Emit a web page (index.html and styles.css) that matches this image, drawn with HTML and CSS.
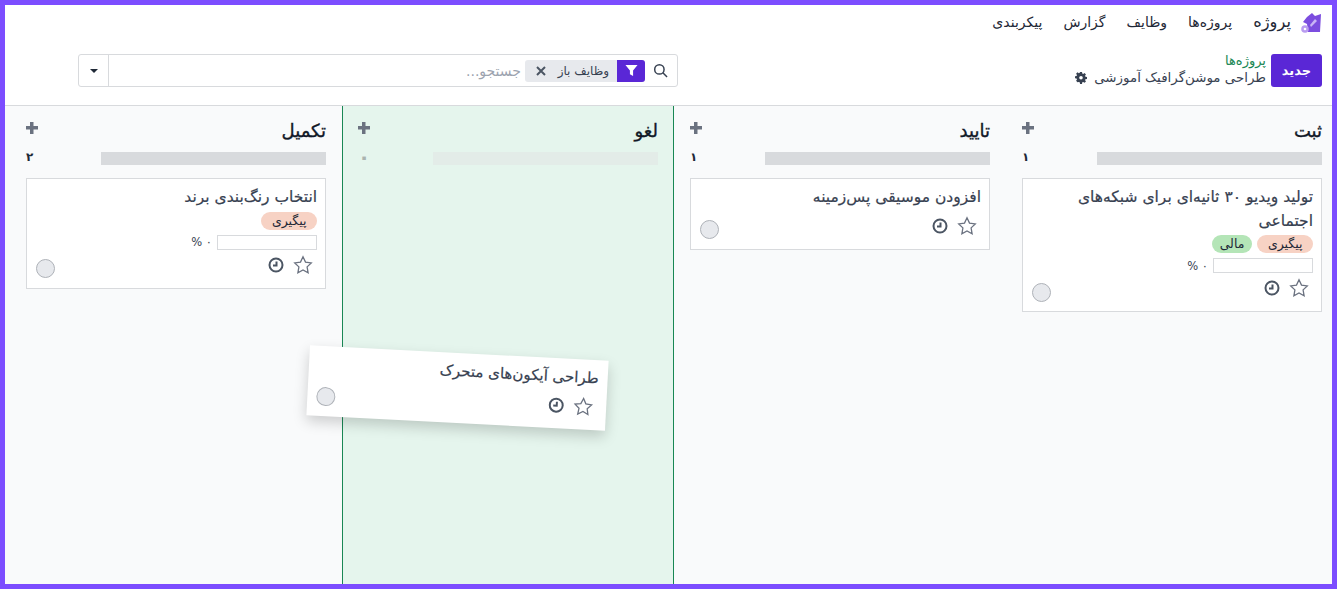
FILE: index.html
```html
<!DOCTYPE html>
<html lang="fa" dir="rtl">
<head>
<meta charset="utf-8">
<title>پروژه</title>
<link rel="stylesheet" href="styles.css">
</head>
<body>
<div class="app">
  <nav class="navbar">
    <svg class="logo" viewBox="0 0 22 22" aria-hidden="true">
      <path class="logo-main" d="M7 5 L12 1 L15 4 L21 2 L20 20 L8 20 L7 12 L3 10 Z"/>
      <path class="logo-cut" d="M10 13 L15 7 L17 9 L11 15 Z"/>
      <circle class="logo-gear" cx="5" cy="17" r="3.800"/>
      <circle class="logo-hole" cx="5" cy="17" r="1.300"/>
    </svg>
    <span class="brand">پروژه</span>
    <a class="nav-link">پروژه‌ها</a>
    <a class="nav-link">وظایف</a>
    <a class="nav-link">گزارش</a>
    <a class="nav-link">پیکربندی</a>
  </nav>
  <header class="panel">
    <button class="btn-new">جدید</button>
    <div class="crumbs">
      <a class="crumb-link">پروژه‌ها</a>
      <div class="crumb-current">طراحی موشن‌گرافیک آموزشی
        <svg class="gear" viewBox="0 0 16 16" aria-hidden="true"><path d="M6.600 0h2.800l.4 2.200 1.300.6 1.900-1.300 2 2-1.300 1.900.6 1.300 2.200.4v2.800l-2.200.4-.6 1.300 1.300 1.900-2 2-1.900-1.300-1.300.6-.4 2.200H6.600l-.4-2.200-1.300-.6L3 14.500l-2-2 1.300-1.900-.6-1.300L-.5 9V6.200l2.200-.4.6-1.300L1 2.600l2-2 1.900 1.300 1.300-.6z" transform="translate(.5 -.1) scale(.94)"/><circle class="gear-hole" cx="8" cy="7.600" r="2.400"/></svg>
      </div>
    </div>
    <div class="search">
      <svg class="search-icon" viewBox="0 0 16 16" aria-hidden="true"><circle cx="6.800" cy="6.800" r="5"/><path d="M10.500 10.500 L15 15"/></svg>
      <div class="facet">
        <span class="facet-icon"><svg viewBox="0 0 14 14" aria-hidden="true"><path d="M0.500 1h13L8.700 7v6L5.300 11V7z"/></svg></span>
        <span class="facet-label">وظایف باز</span>
        <svg class="facet-x" viewBox="0 0 10 10" aria-hidden="true"><path d="M1 1 L9 9 M9 1 L1 9"/></svg>
      </div>
      <span class="placeholder">جستجو...</span>
      <span class="search-drop"><i class="caret"></i></span>
    </div>
  </header>
  <main class="board">
    <section class="col col-first">
      <div class="col-head"><h2>ثبت</h2><span class="plus"></span></div>
      <div class="col-stats"><div class="bar"></div><b class="count">۱</b></div>
      <article class="card">
        <h3>تولید ویدیو ۳۰ ثانیه‌ای برای شبکه‌های اجتماعی</h3>
        <div class="tags"><span class="tag tag-red">پیگیری</span><span class="tag tag-green">مالی</span></div>
        <div class="progress"><span class="progress-box"></span><span class="progress-val">۰ %</span></div>
        <div class="card-foot">
          <svg class="star" viewBox="0 0 20 20" aria-hidden="true"><path d="M10 1.800l2.500 5.300 5.800.8-4.200 4 1 5.800-5.100-2.800-5.100 2.800 1-5.800-4.200-4 5.800-.8z"/></svg>
          <svg class="clock" viewBox="0 0 16 16" aria-hidden="true"><circle cx="8" cy="8" r="6.500"/><path d="M8.500 4.500V8.500H5"/></svg>
          <span class="avatar"></span>
        </div>
      </article>
    </section>
    <section class="col">
      <div class="col-head"><h2>تایید</h2><span class="plus"></span></div>
      <div class="col-stats"><div class="bar"></div><b class="count">۱</b></div>
      <article class="card">
        <h3>افزودن موسیقی پس‌زمینه</h3>
        <div class="card-foot">
          <svg class="star" viewBox="0 0 20 20" aria-hidden="true"><path d="M10 1.800l2.500 5.300 5.800.8-4.200 4 1 5.800-5.100-2.800-5.100 2.800 1-5.800-4.200-4 5.800-.8z"/></svg>
          <svg class="clock" viewBox="0 0 16 16" aria-hidden="true"><circle cx="8" cy="8" r="6.500"/><path d="M8.500 4.500V8.500H5"/></svg>
          <span class="avatar"></span>
        </div>
      </article>
    </section>
    <section class="col col-drop">
      <div class="col-head"><h2>لغو</h2><span class="plus"></span></div>
      <div class="col-stats"><div class="bar"></div><b class="count">۰</b></div>
    </section>
    <section class="col">
      <div class="col-head"><h2>تکمیل</h2><span class="plus"></span></div>
      <div class="col-stats"><div class="bar"></div><b class="count">۲</b></div>
      <article class="card">
        <h3>انتخاب رنگ‌بندی برند</h3>
        <div class="tags"><span class="tag tag-red">پیگیری</span></div>
        <div class="progress"><span class="progress-box"></span><span class="progress-val">۰ %</span></div>
        <div class="card-foot">
          <svg class="star" viewBox="0 0 20 20" aria-hidden="true"><path d="M10 1.800l2.500 5.300 5.800.8-4.200 4 1 5.800-5.100-2.800-5.100 2.800 1-5.800-4.200-4 5.800-.8z"/></svg>
          <svg class="clock" viewBox="0 0 16 16" aria-hidden="true"><circle cx="8" cy="8" r="6.500"/><path d="M8.500 4.500V8.500H5"/></svg>
          <span class="avatar"></span>
        </div>
      </article>
    </section>
    <article class="card card-drag">
      <h3>طراحی آیکون‌های متحرک</h3>
      <div class="card-foot">
        <svg class="star" viewBox="0 0 20 20" aria-hidden="true"><path d="M10 1.800l2.500 5.300 5.800.8-4.200 4 1 5.800-5.100-2.800-5.100 2.800 1-5.800-4.200-4 5.800-.8z"/></svg>
        <svg class="clock" viewBox="0 0 16 16" aria-hidden="true"><circle cx="8" cy="8" r="6.500"/><path d="M8.500 4.500V8.500H5"/></svg>
        <span class="avatar"></span>
      </div>
    </article>
  </main>
</div>
</body>
</html>
```
FILE: styles.css
```css
* { box-sizing: border-box; }
html, body { margin: 0; height: 100%; }
body {
  font-family: "DejaVu Sans", "Noto Sans", sans-serif;
  color: #374151;
  background: #fff;
  overflow: hidden;
}
.app {
  height: 589px;
  border: 5px solid #7c4dff;
  display: flex;
  flex-direction: column;
  background: #fff;
}
.navbar {
  height: 33px;
  display: flex;
  align-items: center;
  padding: 0 10px 0 0;
  flex: none;
}
.logo { width: 22px; height: 22px; margin-left: 9px; position: relative; top: 1px; }
.logo-main { fill: #7c4ddf; }
.logo-cut { fill: #c9b5f5; }
.logo-gear { fill: #b99cf0; }
.logo-hole { fill: #fff; }
.brand { font-size: 16.300px; color: #1f2937; margin-left: 21px; }
.nav-link { font-size: 14px; color: #1f2937; margin-left: 21px; }
.panel {
  height: 68px;
  flex: none;
  border-bottom: 1px solid #d8dadd;
  display: flex;
  align-items: flex-start;
  padding: 16px 10px 0 0;
}
.btn-new {
  width: 51px;
  height: 33px;
  border: 0;
  border-radius: 3px;
  background: #5a27d6;
  color: #fff;
  font: bold 13px "DejaVu Sans", sans-serif;
  margin-left: 5px;
  padding: 0;
}
.crumbs { flex: 1; display: flex; flex-direction: column; }
.crumb-link { color: #198754; font-size: 13px; line-height: 13px; }
.crumb-current { font-size: 13.400px; line-height: 18px; margin-top: 2px; color: #374151; display: flex; align-items: center; gap: 7px; }
.gear { width: 12px; height: 12px; fill: #374151; }
.gear-hole { fill: #fff; }
.search {
  width: 600px;
  height: 33px;
  margin-left: 73px;
  border: 1px solid #d8dadd;
  border-radius: 3px;
  display: flex;
  align-items: center;
  background: #fff;
  flex: none;
}
.search-icon { width: 15px; height: 15px; fill: none; stroke: #374151; stroke-width: 1.600; margin: 0 9px 0 8px; flex: none; }
.facet { display: flex; align-items: center; height: 22px; width: 120px; background: #e7e9ed; border-radius: 3px; flex: none; }
.facet-icon { width: 28px; height: 22px; background: #5a27d6; border-radius: 0 3px 3px 0; display: flex; align-items: center; justify-content: center; flex: none; }
.facet-icon svg { width: 13px; height: 13px; fill: #fff; }
.facet-label { font-size: 12px; color: #374151; margin-right: 8px; flex: 1; white-space: nowrap; }
.facet-x { width: 10px; height: 10px; stroke: #4b5563; stroke-width: 2; fill: none; margin-left: 11px; flex: none; }
.placeholder { flex: 1; font-size: 14px; color: #9ca3af; margin-right: 4px; }
.search-drop { width: 30px; height: 100%; border-right: 1px solid #d8dadd; display: flex; align-items: center; justify-content: center; flex: none; }
.caret { border: 4.500px solid transparent; border-top-color: #1f2937; border-bottom: 0; }
.board {
  flex: 1;
  min-height: 0;
  background: #f9fafb;
  display: flex;
  position: relative;
}
.col { width: 332px; padding: 0 16px; flex: none; }
.col-first { width: 326px; padding-right: 10px; }
.col-drop { background: #e5f5ed; border-left: 1px solid #198754; border-right: 1px solid #198754; padding: 0 15px; }
.col-head { height: 46px; display: flex; align-items: center; justify-content: space-between; }
.col-head h2 { margin: 0; padding-top: 2px; font-size: 18px; font-weight: 400; -webkit-text-stroke: .35px #111827; color: #111827; }
.plus { width: 12px; height: 12px; background: linear-gradient(#6b7280, #6b7280) center / 12px 3.500px no-repeat, linear-gradient(#6b7280, #6b7280) center / 3.500px 12px no-repeat; margin-bottom: 3px; }
.col-stats { display: flex; justify-content: space-between; align-items: center; height: 13px; }
.bar { width: 225px; height: 13px; background: #d8dadd; }
.col-drop .bar { background: #e3ece8; }
.count { font-size: 12px; line-height: 13px; color: #1f2937; margin-bottom: 3px; }
.col-drop .count { color: #aab4b0; font-size: 20px; }
.card {
  width: 300px;
  margin-top: 13px;
  background: #fff;
  border: 1px solid #d8dadd;
  padding: 7px 8px 12px 9px;
}
.card h3 { margin: 0; font-size: 15.500px; font-weight: 400; line-height: 23.500px; color: #374151; -webkit-text-stroke: .2px #374151; }
.tags { display: flex; gap: 5px; margin-top: 2px; }
.tag { height: 18px; padding: 0 10.500px; border-radius: 9px; font-size: 12.500px; line-height: 18px; color: #1f2937; }
.tag-red { background: #f7d2c4; }
.tag-green { background: #b4e5b7; padding: 0 8px; }
.progress { display: flex; align-items: center; gap: 5px; margin-top: 5px; height: 15px; }
.progress-box { width: 100px; height: 15px; border: 1px solid #d8dadd; background: #fff; }
.progress-val { font-size: 11.500px; color: #374151; }
.card-foot { display: flex; align-items: center; margin-top: 5px; height: 22px; }
.progress + .card-foot { margin-top: 4px; }
.star { width: 20px; height: 20px; fill: none; stroke: #6b7280; stroke-width: 1.300; margin-right: 4px; flex: none; }
.clock { width: 16px; height: 16px; fill: none; stroke: #4b5563; stroke-width: 2; margin-right: 9px; flex: none; }
.avatar { width: 19px; height: 19px; border-radius: 50%; background: #e7e9ed; border: 1px solid #aeb2b8; margin-right: auto; flex: none; position: relative; top: 4px; }
.card-drag {
  position: absolute;
  left: 303px;
  top: 247px;
  margin: 0;
  height: 70px;
  width: 299px;
  border: 0;
  padding-right: 9px;
  transform: rotate(3deg);
  box-shadow: 0 6px 14px rgba(0, 0, 0, .18);
}
.card-drag h3 { font-size: 15px; }
```
